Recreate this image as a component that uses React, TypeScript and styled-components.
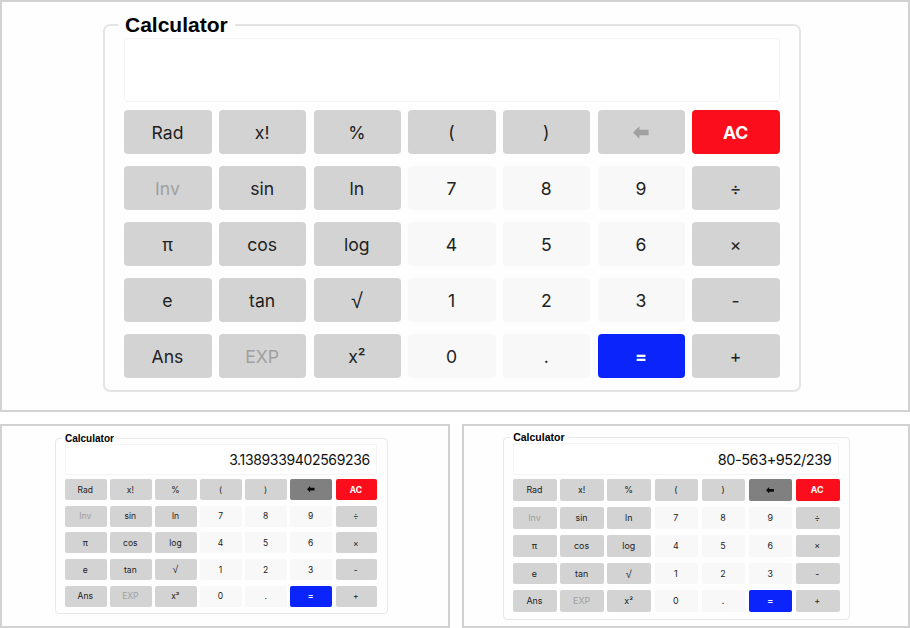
import React from "react";
import styled, { createGlobalStyle, css } from "styled-components";

const GlobalStyle = createGlobalStyle`
  *, *::before, *::after { box-sizing: border-box; }
  body { margin: 0; background: #fff; }
`;

interface Metrics {
  offsetX: number;
  offsetY: number;
  width: number;
  height: number;
  border: number;
  borderColor: string;
  radius: number;
  padX: number;
  legendSize: number;
  legendHeight: number;
  legendLine: number;
  legendPad: number;
  legendShift: number;
  displayHeight: number;
  displayGap: number;
  displaySize: number;
  displayTracking: number;
  displayPad: number;
  keyWidth: number;
  keyHeight: number;
  colGap: number;
  rowGap: number;
  keySize: number;
  keyDrop: number;
  keyRadius: number;
}

type Kind = "fn" | "num" | "clear" | "equals" | "off" | "back";

const Page = styled.main`
  width: 910px;
  height: 628px;
  display: grid;
  grid-template-columns: 450px 448px;
  grid-template-rows: 412px 204px;
  gap: 12px;
  overflow: hidden;
`;

const Panel = styled.section<{ $wide?: boolean }>`
  border: 2px solid #d2d2d2;
  background: #fefefe;
  overflow: hidden;
  ${(p) => p.$wide && css`grid-column: 1 / -1;`}
`;

const Frame = styled.fieldset<{ $m: Metrics }>`
  width: ${(p) => p.$m.width}px;
  height: ${(p) => p.$m.height}px;
  min-width: 0;
  margin: ${(p) => p.$m.offsetY}px 0 0 ${(p) => p.$m.offsetX}px;
  padding: 0 ${(p) => p.$m.padX}px;
  border: ${(p) => p.$m.border}px solid ${(p) => p.$m.borderColor};
  border-radius: ${(p) => p.$m.radius}px;
`;

const Legend = styled.legend<{ $m: Metrics }>`
  height: ${(p) => p.$m.legendHeight}px;
  margin-left: ${(p) => p.$m.legendShift}px;
  padding: 0 ${(p) => p.$m.legendPad}px;
  font: bold ${(p) => p.$m.legendSize}px / ${(p) => p.$m.legendLine}px "Liberation Sans", Arial, sans-serif;
  color: #000;
`;

const Display = styled.output<{ $m: Metrics }>`
  display: flex;
  align-items: center;
  justify-content: flex-end;
  height: ${(p) => p.$m.displayHeight}px;
  margin-bottom: ${(p) => p.$m.displayGap}px;
  padding-right: ${(p) => p.$m.displayPad}px;
  border: 1px solid #f4f4f4;
  border-radius: ${(p) => p.$m.keyRadius}px;
  background: #fff;
  color: #111;
  font: 400 ${(p) => p.$m.displaySize}px Inter, sans-serif;
  letter-spacing: ${(p) => p.$m.displayTracking}px;
`;

const Keypad = styled.div<{ $m: Metrics }>`
  display: grid;
  grid-template-columns: repeat(7, ${(p) => p.$m.keyWidth}px);
  grid-auto-rows: ${(p) => p.$m.keyHeight}px;
  column-gap: ${(p) => p.$m.colGap}px;
  row-gap: ${(p) => p.$m.rowGap}px;
`;

const kinds = {
  fn: css`background: #d3d3d3; color: #222;`,
  num: css`background: #f8f8f8; color: #222;`,
  clear: css`background: #fc0d1b; color: #fff; font-weight: 700;`,
  equals: css`background: #0b24fb; color: #fff; font-weight: 700;`,
  off: css`background: #d3d3d3; color: #a0a0a0;`,
  back: css`background: #808080; color: #0a0a0a;`,
};

const Key = styled.button<{ $m: Metrics; $kind: Kind }>`
  display: flex;
  align-items: center;
  justify-content: center;
  min-width: 0;
  margin: 0;
  padding: ${(p) => p.$m.keyDrop}px 1px 0 0;
  border: 0;
  border-radius: ${(p) => p.$m.keyRadius}px;
  font: 400 ${(p) => p.$m.keySize}px / 1 Inter, sans-serif;
  ${(p) => kinds[p.$kind]}
`;

const Radical = styled.span`
  padding-top: 0.12em;
  font-family: "Liberation Sans", Arial, sans-serif;
  font-size: 1.22em;
`;

const ArrowIcon = styled.svg`
  display: block;
  width: 0.89em;
  height: 0.74em;
  margin-top: -1px;
  fill: currentColor;
`;

const BackArrow = () => (
  <ArrowIcon viewBox="0 0 15.6 13" aria-hidden="true">
    <path d="M0 6.5 6.4.2v3.6h9.2v5.4H6.4v3.6Z" />
  </ArrowIcon>
);

const rows = [
  ["Rad", "x!", "%", "(", ")", "back", "AC"],
  ["Inv", "sin", "ln", "7", "8", "9", "÷"],
  ["π", "cos", "log", "4", "5", "6", "×"],
  ["e", "tan", "√", "1", "2", "3", "-"],
  ["Ans", "EXP", "x²", "0", ".", "=", "+"],
];

function kindOf(label: string, empty: boolean): Kind {
  if (label === "back") return empty ? "off" : "back";
  if (label === "AC") return "clear";
  if (label === "=") return "equals";
  if (label === "Inv" || label === "EXP") return "off";
  return /^[0-9.]$/.test(label) ? "num" : "fn";
}

function face(label: string) {
  if (label === "back") return <BackArrow />;
  if (label === "√") return <Radical>{label}</Radical>;
  return label;
}

function Calculator({ m, value = "" }: { m: Metrics; value?: string }) {
  return (
    <Frame $m={m}>
      <Legend $m={m}>Calculator</Legend>
      <Display $m={m}>{value}</Display>
      <Keypad $m={m}>
        {rows.flat().map((label) => (
          <Key key={label} type="button" $m={m} $kind={kindOf(label, value === "")} aria-label={label}>
            {face(label)}
          </Key>
        ))}
      </Keypad>
    </Frame>
  );
}

const large: Metrics = {
  offsetX: 101, offsetY: 10, width: 698, height: 380, border: 2, borderColor: "#e4e4e4", radius: 7, padX: 19.3,
  legendSize: 21, legendHeight: 26, legendLine: 26, legendPad: 7, legendShift: -6.3,
  displayHeight: 64, displayGap: 8, displaySize: 30, displayTracking: 0, displayPad: 14,
  keyWidth: 87.4, keyHeight: 43.7, colGap: 7.3, rowGap: 12.3, keySize: 17.6, keyDrop: 2, keyRadius: 4,
};

const compact: Metrics = {
  offsetX: 52.5, offsetY: 6, width: 333, height: 181.7, border: 1, borderColor: "#e8e8e8", radius: 4, padX: 9.5,
  legendSize: 10, legendHeight: 12.4, legendLine: 14, legendPad: 3.3, legendShift: -3.3,
  displayHeight: 30.4, displayGap: 4.2, displaySize: 14, displayTracking: -0.35, displayPad: 6.2,
  keyWidth: 41.5, keyHeight: 21, colGap: 3.6, rowGap: 5.7, keySize: 8.5, keyDrop: 0.8, keyRadius: 2,
};

const medium: Metrics = {
  offsetX: 38.5, offsetY: 5, width: 347.5, height: 188.5, border: 1, borderColor: "#e8e8e8", radius: 4, padX: 9.7,
  legendSize: 10.5, legendHeight: 12.4, legendLine: 12.4, legendPad: 3.4, legendShift: -3.4,
  displayHeight: 31.6, displayGap: 4.1, displaySize: 14.5, displayTracking: -0.45, displayPad: 7,
  keyWidth: 43.5, keyHeight: 21.8, colGap: 3.65, rowGap: 6.05, keySize: 8.9, keyDrop: 1, keyRadius: 2,
};

export default function App() {
  return (
    <>
      <GlobalStyle />
      <Page>
        <Panel $wide>
          <Calculator m={large} />
        </Panel>
        <Panel>
          <Calculator m={compact} value="3.1389339402569236" />
        </Panel>
        <Panel>
          <Calculator m={medium} value="80-563+952/239" />
        </Panel>
      </Page>
    </>
  );
}
